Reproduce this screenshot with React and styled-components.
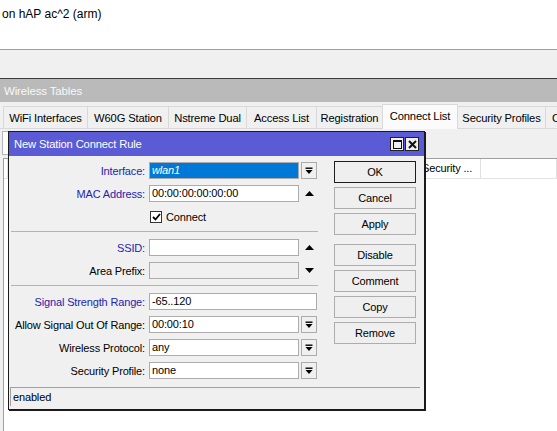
import React from 'react';
import styled, { createGlobalStyle } from 'styled-components';

const Global = createGlobalStyle`
  html, body { margin: 0; padding: 0; background: #fff; }
  body { font-family: "Liberation Sans", Arial, sans-serif; font-size: 11px; color: #000; }
  * { box-sizing: border-box; }
`;

const Screen = styled.div`
  position: relative;
  width: 557px;
  height: 431px;
  overflow: hidden;
  background: #fff;
  display: flex;
  flex-direction: column;
`;

const TopBar = styled.div`
  height: 50px;
  flex: none;
  border-bottom: 1px solid #a0a0a0;
  padding: 7px 0 0 2px;
  font-size: 12px;
  line-height: 14px;
`;

const GrayStrip = styled.div`
  height: 28px;
  flex: none;
  background: #f0f0f0;
`;

const Window = styled.div`
  flex: 1;
  display: flex;
  flex-direction: column;
  border-top: 1px solid #3c3c3c;
  background: #f0f0f0;
`;

const WinTitle = styled.div`
  height: 23px;
  flex: none;
  background: #bababa;
  color: #f8f8f8;
  padding: 2px 0 0 4px;
  line-height: 21px;
  font-size: 11.5px;
  letter-spacing: -0.15px;
`;

const TabStrip = styled.div`
  height: 27px;
  flex: none;
  display: flex;
  align-items: flex-end;
  padding-left: 3px;
  border-bottom: 1px solid #d9d9d9;
`;

const Tab = styled.div`
  width: ${(p) => p.$w}px;
  height: ${(p) => (p.$active ? 25 : 22)}px;
  margin-right: -1px;
  margin-bottom: ${(p) => (p.$active ? -1 : 0)}px;
  border: 1px solid #d9d9d9;
  border-bottom: 0;
  background: ${(p) => (p.$active ? '#fbfbfb' : '#f0f0f0')};
  position: relative;
  z-index: ${(p) => (p.$active ? 1 : 0)};
  display: flex;
  align-items: center;
  justify-content: center;
  white-space: nowrap;
  letter-spacing: -0.15px;
  font-size: 11.2px;
  padding-bottom: ${(p) => (p.$active ? 3 : 0)}px;
  flex: none;
`;

const Toolbar = styled.div`
  height: 29px;
  flex: none;
  padding: 2px 0 3px 2px;
  display: flex;
`;

const ToolButton = styled.div`
  width: 28px;
  border: 1px solid #b5b5b5;
  background: #fdfdfd;
`;

const Table = styled.div`
  flex: 1;
  margin-left: 3px;
  border-left: 1px solid #a0a0a0;
  border-top: 1px solid #a0a0a0;
  background: #fff;
`;

const HeaderRow = styled.div`
  height: 20px;
  display: flex;
  background: #fff;
  border-bottom: 1px solid #e3e3e3;
`;

const HeaderCell = styled.div`
  width: ${(p) => (p.$w ? `${p.$w}px` : 'auto')};
  flex: ${(p) => (p.$w ? 'none' : '1')};
  border-right: 1px solid #e0e0e0;
  padding-left: 2px;
  line-height: 19px;
  white-space: nowrap;
  letter-spacing: -0.15px;
`;

/* ---------- dialog ---------- */

const Dialog = styled.div`
  position: absolute;
  left: 8px;
  top: 131px;
  width: 417px;
  height: 279px;
  border: 1px solid #1a1a1a;
  box-shadow: 1px 1px 0 #1a1a1a;
  background: #f0f0f0;
  display: flex;
  flex-direction: column;
`;

const DlgTitle = styled.div`
  height: 24px;
  flex: none;
  background: #5b5bd6;
  color: #fff;
  display: flex;
  align-items: center;
  padding: 0 5px 0 5px;
  letter-spacing: -0.15px;
  font-size: 11.2px;
`;

const DlgTitleText = styled.div`
  flex: 1;
`;

const TitleButtons = styled.div`
  display: flex;
  gap: 1px;
`;

const TitleBtn = styled.div`
  width: 14px;
  height: 14px;
  border: 1px solid #222;
  background: #f0f0f0;
  display: flex;
  align-items: center;
  justify-content: center;
`;

const DlgBody = styled.div`
  flex: 1;
  display: flex;
  padding-right: 8px;
`;

const Form = styled.div`
  width: 309px;
  padding-top: 6px;
  display: flex;
  flex-direction: column;
`;

const Row = styled.div`
  display: flex;
  align-items: center;
  height: 17px;
  margin-top: ${(p) => p.$mt || 0}px;
`;

const Label = styled.div`
  width: 136px;
  text-align: right;
  color: ${(p) => (p.$blue ? '#2424b0' : '#000')};
  letter-spacing: -0.15px;
  white-space: nowrap;
`;

const Field = styled.div`
  margin-left: 4px;
  width: ${(p) => (p.$wide ? 168 : 150)}px;
  height: 17px;
  border: 1px solid #acacac;
  background: ${(p) => (p.$selected ? '#0078d7' : p.$disabled ? '#f0f0f0' : '#fff')};
  color: ${(p) => (p.$selected ? '#fff' : '#000')};
  font-style: ${(p) => (p.$selected ? 'italic' : 'normal')};
  padding-left: 2px;
  line-height: 15px;
  letter-spacing: -0.15px;
  white-space: nowrap;
  overflow: hidden;
`;

const Side = styled.div`
  width: 16px;
  height: 17px;
  margin-left: 2px;
  display: flex;
  align-items: center;
  justify-content: center;
`;

const DropBtn = styled.div`
  width: 16px;
  height: 17px;
  border: 1px solid #acacac;
  background: #f0f0f0;
  display: flex;
  align-items: center;
  justify-content: center;
`;

const CheckRow = styled.label`
  display: flex;
  align-items: center;
  height: 17px;
  margin-top: ${(p) => p.$mt || 0}px;
  margin-left: 141px;
  gap: 4px;
  letter-spacing: -0.15px;
`;

const CheckBox = styled.div`
  width: 12px;
  height: 12px;
  border: 1px solid #333;
  background: #fff;
  display: flex;
  align-items: center;
  justify-content: center;
`;

const Separator = styled.div`
  height: 1px;
  background: #b4b4b4;
  margin: ${(p) => p.$mt || 0}px 0 0 2px;
`;

const ButtonCol = styled.div`
  width: 82px;
  margin-left: 16px;
  padding-top: 5px;
  display: flex;
  flex-direction: column;
`;

const Button = styled.div`
  height: 22px;
  margin-top: ${(p) => p.$mt || 0}px;
  border: 1px solid ${(p) => (p.$default ? '#1e1e1e' : '#adadad')};
  background: #efefef;
  display: flex;
  align-items: center;
  justify-content: center;
  letter-spacing: -0.15px;
`;

const StatusBar = styled.div`
  height: 19px;
  flex: none;
  margin: 0 4px 3px 1px;
  border-top: 1px solid #a0a0a0;
  border-left: 1px solid #a0a0a0;
  padding-left: 2px;
  line-height: 18px;
  letter-spacing: -0.15px;
`;

const DropGlyph = () => (
  <svg width="8" height="8" viewBox="0 0 8 8">
    <rect x="0.5" y="0.5" width="7" height="1.4" fill="#000" />
    <polygon points="0.5,3 7.5,3 4,7" fill="#000" />
  </svg>
);

const UpArrow = () => (
  <svg width="9" height="5" viewBox="0 0 9 5">
    <polygon points="0,5 9,5 4.5,0" fill="#000" />
  </svg>
);

const DownArrow = () => (
  <svg width="9" height="5" viewBox="0 0 9 5">
    <polygon points="0,0 9,0 4.5,5" fill="#000" />
  </svg>
);

const tabs = [
  { t: 'WiFi Interfaces', w: 85 },
  { t: 'W60G Station', w: 82 },
  { t: 'Nstreme Dual', w: 79 },
  { t: 'Access List', w: 71 },
  { t: 'Registration', w: 67 },
  { t: 'Connect List', w: 76, active: true },
  { t: 'Security Profiles', w: 89 },
  { t: 'Channels', w: 60 },
];

const FormRow = ({ label, blue, value, mt, side, selected, disabled, wide }) => (
  <Row $mt={mt}>
    <Label $blue={blue}>{label}</Label>
    <Field $selected={selected} $disabled={disabled} $wide={wide}>
      {value}
    </Field>
    {!wide && (
      <Side>
        {side === 'drop' && (
          <DropBtn>
            <DropGlyph />
          </DropBtn>
        )}
        {side === 'up' && <UpArrow />}
        {side === 'down' && <DownArrow />}
      </Side>
    )}
  </Row>
);

export default function App() {
  return (
    <>
      <Global />
      <Screen>
        <TopBar>on hAP ac^2 (arm)</TopBar>
        <GrayStrip />
        <Window>
          <WinTitle>Wireless Tables</WinTitle>
          <TabStrip>
            {tabs.map((tb) => (
              <Tab key={tb.t} $w={tb.w} $active={tb.active}>
                {tb.t}
              </Tab>
            ))}
          </TabStrip>
          <Toolbar>
            <ToolButton />
          </Toolbar>
          <Table>
            <HeaderRow>
              <HeaderCell $w={4} />
              <HeaderCell $w={412} />
              <HeaderCell $w={61}>Security ...</HeaderCell>
              <HeaderCell />
            </HeaderRow>
          </Table>
        </Window>

        <Dialog>
          <DlgTitle>
            <DlgTitleText>New Station Connect Rule</DlgTitleText>
            <TitleButtons>
              <TitleBtn>
                <svg width="9" height="9" viewBox="0 0 9 9">
                  <rect x="0.5" y="0.5" width="8" height="8" fill="none" stroke="#111" strokeWidth="1" />
                  <rect x="0.5" y="0.5" width="8" height="1.5" fill="#111" />
                </svg>
              </TitleBtn>
              <TitleBtn>
                <svg width="9" height="9" viewBox="0 0 9 9">
                  <path d="M1 1 L8 8 M8 1 L1 8" stroke="#111" strokeWidth="2" />
                </svg>
              </TitleBtn>
            </TitleButtons>
          </DlgTitle>
          <DlgBody>
            <Form>
              <FormRow label="Interface:" blue value="wlan1" selected side="drop" />
              <FormRow label="MAC Address:" blue value="00:00:00:00:00:00" mt={6} side="up" />
              <CheckRow $mt={6}>
                <CheckBox>
                  <svg width="9" height="8" viewBox="0 0 9 8">
                    <path d="M1 4 L3.5 6.5 L8 1" fill="none" stroke="#000" strokeWidth="1.8" />
                  </svg>
                </CheckBox>
                Connect
              </CheckRow>
              <Separator $mt={6} />
              <FormRow label="SSID:" blue value="" mt={7} side="up" />
              <FormRow label="Area Prefix:" value="" mt={6} side="down" disabled />
              <Separator $mt={6} />
              <FormRow label="Signal Strength Range:" blue value="-65..120" mt={7} wide />
              <FormRow label="Allow Signal Out Of Range:" value="00:00:10" mt={6} side="drop" />
              <FormRow label="Wireless Protocol:" value="any" mt={6} side="drop" />
              <FormRow label="Security Profile:" value="none" mt={6} side="drop" />
            </Form>
            <ButtonCol>
              <Button $default>OK</Button>
              <Button $mt={4}>Cancel</Button>
              <Button $mt={4}>Apply</Button>
              <Button $mt={9}>Disable</Button>
              <Button $mt={4}>Comment</Button>
              <Button $mt={4}>Copy</Button>
              <Button $mt={4}>Remove</Button>
            </ButtonCol>
          </DlgBody>
          <StatusBar>enabled</StatusBar>
        </Dialog>
      </Screen>
    </>
  );
}
